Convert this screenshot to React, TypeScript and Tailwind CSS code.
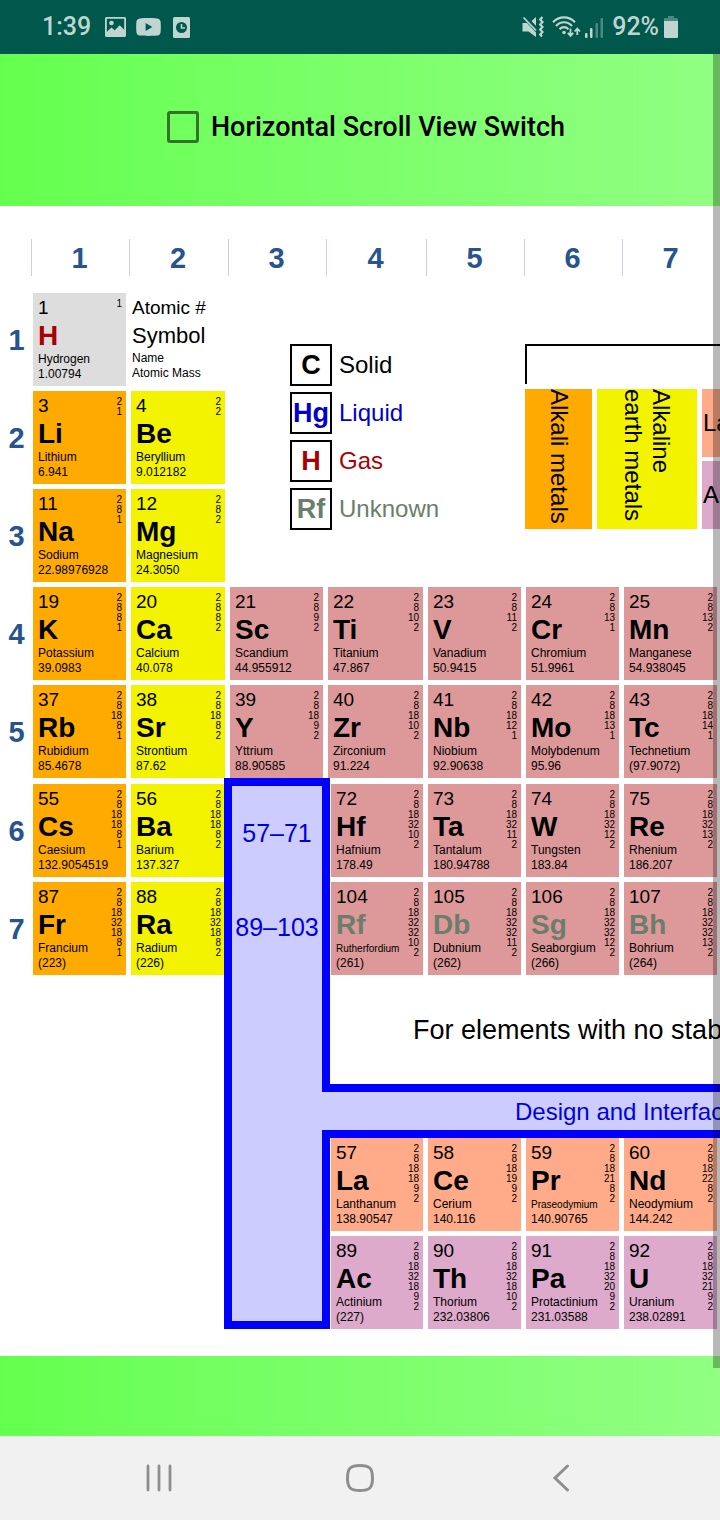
import React from "react";

type Kind = "nonmetal" | "alkali" | "alkaline" | "transition" | "lanthanoid" | "actinoid";
type Phase = "solid" | "gas" | "unknown";

interface Element {
  n: number;
  symbol: string;
  name: string;
  mass: string;
  shells: number[];
  kind: Kind;
  phase?: Phase;
}

const kindClass: Record<Kind, string> = {
  nonmetal: "bg-[#dddddd]",
  alkali: "bg-[#ffaa00]",
  alkaline: "bg-[#f3f300]",
  transition: "bg-[#dd9999]",
  lanthanoid: "bg-[#ffaa88]",
  actinoid: "bg-[#ddaacc]",
};

const phaseClass: Record<Phase, string> = {
  solid: "text-black",
  gas: "text-[#aa0000]",
  unknown: "text-[#6c7d6c]",
};

const el = (
  n: number,
  symbol: string,
  name: string,
  mass: string,
  shells: number[],
  kind: Kind,
  phase: Phase = "solid",
): Element => ({ n, symbol, name, mass, shells, kind, phase });

const period1 = el(1, "H", "Hydrogen", "1.00794", [1], "nonmetal", "gas");

const period2 = [
  el(3, "Li", "Lithium", "6.941", [2, 1], "alkali"),
  el(4, "Be", "Beryllium", "9.012182", [2, 2], "alkaline"),
];

const period3 = [
  el(11, "Na", "Sodium", "22.98976928", [2, 8, 1], "alkali"),
  el(12, "Mg", "Magnesium", "24.3050", [2, 8, 2], "alkaline"),
];

const period4 = [
  el(19, "K", "Potassium", "39.0983", [2, 8, 8, 1], "alkali"),
  el(20, "Ca", "Calcium", "40.078", [2, 8, 8, 2], "alkaline"),
  el(21, "Sc", "Scandium", "44.955912", [2, 8, 9, 2], "transition"),
  el(22, "Ti", "Titanium", "47.867", [2, 8, 10, 2], "transition"),
  el(23, "V", "Vanadium", "50.9415", [2, 8, 11, 2], "transition"),
  el(24, "Cr", "Chromium", "51.9961", [2, 8, 13, 1], "transition"),
  el(25, "Mn", "Manganese", "54.938045", [2, 8, 13, 2], "transition"),
];

const period5 = [
  el(37, "Rb", "Rubidium", "85.4678", [2, 8, 18, 8, 1], "alkali"),
  el(38, "Sr", "Strontium", "87.62", [2, 8, 18, 8, 2], "alkaline"),
  el(39, "Y", "Yttrium", "88.90585", [2, 8, 18, 9, 2], "transition"),
  el(40, "Zr", "Zirconium", "91.224", [2, 8, 18, 10, 2], "transition"),
  el(41, "Nb", "Niobium", "92.90638", [2, 8, 18, 12, 1], "transition"),
  el(42, "Mo", "Molybdenum", "95.96", [2, 8, 18, 13, 1], "transition"),
  el(43, "Tc", "Technetium", "(97.9072)", [2, 8, 18, 14, 1], "transition"),
];

const period6 = [
  el(55, "Cs", "Caesium", "132.9054519", [2, 8, 18, 18, 8, 1], "alkali"),
  el(56, "Ba", "Barium", "137.327", [2, 8, 18, 18, 8, 2], "alkaline"),
  el(72, "Hf", "Hafnium", "178.49", [2, 8, 18, 32, 10, 2], "transition"),
  el(73, "Ta", "Tantalum", "180.94788", [2, 8, 18, 32, 11, 2], "transition"),
  el(74, "W", "Tungsten", "183.84", [2, 8, 18, 32, 12, 2], "transition"),
  el(75, "Re", "Rhenium", "186.207", [2, 8, 18, 32, 13, 2], "transition"),
];

const period7 = [
  el(87, "Fr", "Francium", "(223)", [2, 8, 18, 32, 18, 8, 1], "alkali"),
  el(88, "Ra", "Radium", "(226)", [2, 8, 18, 32, 18, 8, 2], "alkaline"),
  el(104, "Rf", "Rutherfordium", "(261)", [2, 8, 18, 32, 32, 10, 2], "transition", "unknown"),
  el(105, "Db", "Dubnium", "(262)", [2, 8, 18, 32, 32, 11, 2], "transition", "unknown"),
  el(106, "Sg", "Seaborgium", "(266)", [2, 8, 18, 32, 32, 12, 2], "transition", "unknown"),
  el(107, "Bh", "Bohrium", "(264)", [2, 8, 18, 32, 32, 13, 2], "transition", "unknown"),
];

const lanthanoids = [
  el(57, "La", "Lanthanum", "138.90547", [2, 8, 18, 18, 9, 2], "lanthanoid"),
  el(58, "Ce", "Cerium", "140.116", [2, 8, 18, 19, 9, 2], "lanthanoid"),
  el(59, "Pr", "Praseodymium", "140.90765", [2, 8, 18, 21, 8, 2], "lanthanoid"),
  el(60, "Nd", "Neodymium", "144.242", [2, 8, 18, 22, 8, 2], "lanthanoid"),
];

const actinoids = [
  el(89, "Ac", "Actinium", "(227)", [2, 8, 18, 32, 18, 9, 2], "actinoid"),
  el(90, "Th", "Thorium", "232.03806", [2, 8, 18, 32, 18, 10, 2], "actinoid"),
  el(91, "Pa", "Protactinium", "231.03588", [2, 8, 18, 32, 20, 9, 2], "actinoid"),
  el(92, "U", "Uranium", "238.02891", [2, 8, 18, 32, 21, 9, 2], "actinoid"),
];

const longNames = ["Rutherfordium", "Praseodymium"];

function ElementCell({ e, inset = false }: { e: Element; inset?: boolean }) {
  return (
    <td className="p-0 align-top">
      <div
        className={`mr-[5px] flex h-[93px] justify-between pl-[5px] pr-[4px] ${inset ? "ml-[3px]" : ""} ${kindClass[e.kind]}`}
      >
        <div className="w-0 whitespace-nowrap pt-[3px]">
          <div className="text-[19px] leading-6">{e.n}</div>
          <div className={`text-[28px] font-bold leading-8 ${phaseClass[e.phase ?? "solid"]}`}>{e.symbol}</div>
          <div className={`leading-[15px] ${longNames.includes(e.name) ? "text-[10px]" : "text-[12px]"}`}>{e.name}</div>
          <div className="text-[12px] leading-[15px]">{e.mass}</div>
        </div>
        <div className="pt-[6px] text-right text-[10px] leading-[10px]">
          {e.shells.map((s, i) => (
            <div key={i}>{s}</div>
          ))}
        </div>
      </div>
    </td>
  );
}

function PeriodLabel({ n }: { n: number }) {
  return (
    <th scope="row" className="p-0 align-top text-[29px] font-bold leading-[95px] text-[#27548d]">
      {n}
    </th>
  );
}

const phases = [
  { symbol: "C", label: "Solid", color: "text-black" },
  { symbol: "Hg", label: "Liquid", color: "text-[#0000cc]" },
  { symbol: "H", label: "Gas", color: "text-[#aa0000]" },
  { symbol: "Rf", label: "Unknown", color: "text-[#6c7d6c]" },
];

function Legend() {
  return (
    <div className="flex pl-[60px] pt-[51px]">
      <ul className="flex w-[235px] shrink-0 flex-col gap-[6px]">
        {phases.map((p) => (
          <li key={p.label} className={`flex items-center gap-[7px] text-2xl ${p.color}`}>
            <span className="flex h-[42px] w-[42px] items-center justify-center border-2 border-black text-[27px] font-bold leading-none">
              {p.symbol}
            </span>
            {p.label}
          </li>
        ))}
      </ul>
      <div className="shrink-0 text-2xl leading-[28px]">
        <div className="mb-[5px] h-10 border-l-2 border-t-2 border-black" />
        <div className="flex h-[140px] gap-[5px] whitespace-nowrap">
          <div className="flex w-[67px] justify-center bg-[#ffaa00]">
            <span className="[writing-mode:vertical-rl]">Alkali metals</span>
          </div>
          <div className="flex w-[100px] justify-center bg-[#f3f300]">
            <span className="[writing-mode:vertical-rl]">
              Alkaline
              <br />
              earth metals
            </span>
          </div>
          <div className="flex w-[140px] flex-col gap-1">
            <div className="flex flex-1 items-center bg-[#ffaa88] pl-px">Lanthanoids</div>
            <div className="flex flex-1 items-center bg-[#ddaacc] pl-px">Actinoids</div>
          </div>
        </div>
      </div>
    </div>
  );
}

function PeriodicTable() {
  return (
    <table className="w-[722px] table-fixed border-collapse font-['Liberation_Sans',Arial,sans-serif] text-black">
      <colgroup>
        <col className="w-[33px]" />
        <col className="w-[98px]" />
        <col className="w-[99px]" />
        <col className="w-[98px]" />
        <col className="w-[100px]" />
        <col className="w-[98px]" />
        <col className="w-[98px]" />
        <col className="w-[98px]" />
      </colgroup>
      <thead>
        <tr className="h-[87px]">
          <td className="p-0" />
          {[1, 2, 3, 4, 5, 6, 7].map((g) => (
            <th key={g} scope="col" className="p-0 pt-[33px] align-top">
              <div className="-ml-[2px] h-[37px] border-l border-[#ccccee] pr-1 text-[29px] font-bold leading-[39px] text-[#27548d]">
                {g}
              </div>
            </th>
          ))}
        </tr>
      </thead>
      <tbody>
        <tr className="h-[98px]">
          <PeriodLabel n={1} />
          <ElementCell e={period1} />
          <td className="whitespace-nowrap p-0 pl-[1px] pt-[3px] align-top">
            <div className="text-[19px] leading-6">Atomic #</div>
            <div className="text-[22px] leading-[31px]">Symbol</div>
            <div className="text-[12px] leading-[15px]">Name</div>
            <div className="text-[12px] leading-[15px]">Atomic Mass</div>
          </td>
          <td colSpan={5} rowSpan={3} className="p-0 align-top">
            <Legend />
          </td>
        </tr>
        <tr className="h-[98px]">
          <PeriodLabel n={2} />
          {period2.map((e) => <ElementCell key={e.n} e={e} />)}
        </tr>
        <tr className="h-[98px]">
          <PeriodLabel n={3} />
          {period3.map((e) => <ElementCell key={e.n} e={e} />)}
        </tr>
        <tr className="h-[98px]">
          <PeriodLabel n={4} />
          {period4.map((e) => <ElementCell key={e.n} e={e} />)}
        </tr>
        <tr className="h-[99px]">
          <PeriodLabel n={5} />
          {period5.map((e) => <ElementCell key={e.n} e={e} />)}
        </tr>
        <tr className="h-[98px]">
          <PeriodLabel n={6} />
          {period6.slice(0, 2).map((e) => <ElementCell key={e.n} e={e} />)}
          <td rowSpan={5} className="p-0 align-top">
            <div className="relative -ml-[6px] -mr-[2px] -mt-[6px] h-[551px] border-8 border-[#0000ff] bg-[#ccccff] text-center text-[25px] leading-[94px] text-[#0000dd]">
              <div>57–71</div>
              <div>89–103</div>
            </div>
          </td>
          {period6.slice(2).map((e, i) => <ElementCell key={e.n} e={e} inset={i === 0} />)}
        </tr>
        <tr className="h-[98px]">
          <PeriodLabel n={7} />
          {period7.slice(0, 2).map((e) => <ElementCell key={e.n} e={e} />)}
          {period7.slice(2).map((e, i) => <ElementCell key={e.n} e={e} inset={i === 0} />)}
        </tr>
        <tr className="h-[158px]">
          <td colSpan={3} className="p-0" />
          <td colSpan={4} className="whitespace-nowrap p-0 align-top">
            <div className="flex h-[104px] items-center pb-1 pl-[85px] text-[27px]">
              For elements with no stable isotopes
            </div>
            <div className="relative -ml-[6px] flex h-[54px] items-center border-y-8 border-[#0000ff] bg-[#ccccff] pl-[193px] pt-[2px] text-2xl text-[#0000dd]">
              Design and Interface
            </div>
          </td>
        </tr>
        <tr className="h-[98px]">
          <td colSpan={3} className="p-0" />
          {lanthanoids.map((e, i) => <ElementCell key={e.n} e={e} inset={i === 0} />)}
        </tr>
        <tr className="h-[93px]">
          <td colSpan={3} className="p-0" />
          {actinoids.map((e, i) => <ElementCell key={e.n} e={e} inset={i === 0} />)}
        </tr>
      </tbody>
    </table>
  );
}

function StatusBar() {
  return (
    <header className="flex h-[54px] items-center justify-between bg-[#00574b] pl-[42px] pr-[42px] text-[25px] font-medium text-[#bfd5d2]">
      <div className="flex items-center">
        <span>1:39</span>
        <svg className="ml-[14px]" width="21" height="20" viewBox="0 0 21 20" fill="currentColor">
          <path
            fillRule="evenodd"
            d="M1.500 0h18A1.500 1.500 0 0 1 21 1.500v17a1.500 1.500 0 0 1-1.500 1.500h-18A1.500 1.500 0 0 1 0 18.500v-17A1.500 1.500 0 0 1 1.500 0zM1.800 1.800v13l4.700-4.300 3.200 2.700 5-5 4.500 4.500V1.800z"
          />
          <circle cx="6.500" cy="6" r="2.300" />
        </svg>
        <svg className="ml-[10px]" width="25" height="18" viewBox="0 0 26 18" fill="currentColor" preserveAspectRatio="none">
          <path
            fillRule="evenodd"
            d="M4 .4C9 -.1 17 -.1 22 .4c2.500.3 3.400 1.600 3.600 3.600.3 3 .3 7 0 10-.2 2-1.100 3.300-3.600 3.600-5 .5-13 .5-18 0C1.500 17.300.6 16 .4 14c-.3-3-.3-7 0-10C.6 2 1.500.7 4 .4zM10 5v8l7-4z"
          />
        </svg>
        <svg className="ml-[12px]" width="17" height="21" viewBox="0 0 17 21" fill="none">
          <rect width="17" height="21" rx="1.500" fill="currentColor" />
          <circle cx="8.500" cy="10.500" r="5.500" fill="#00574b" />
          <path d="M8.500 7v4h3.500" stroke="currentColor" strokeWidth="1.600" />
        </svg>
      </div>
      <div className="flex items-center">
        <svg width="23" height="22" viewBox="0 0 23 22" fill="none">
          <path d="M.5 7H5l9 9.500V21L6.500 15.500h-6z" fill="currentColor" />
          <path d="M9.500 5 14 1v9z" fill="currentColor" />
          <path d="M1.500 1.500 14 14.500" stroke="currentColor" strokeWidth="1.800" />
          <path
            d="M20.500 1l-2.300 2.500 2.300 2.500-2.300 2.500 2.300 2.500-2.300 2.500 2.300 2.500-2.300 2.500 1.800 2"
            stroke="currentColor"
            strokeWidth="2.200"
          />
        </svg>
        <svg className="ml-[7px]" width="29" height="22" viewBox="0 0 29 22" fill="none" stroke="currentColor">
          <path d="M1 6.200C7-.3 17-.3 23 6.200" strokeWidth="2.100" />
          <path d="M4 10C8.500 5 15.500 5 20 10" strokeWidth="2.100" />
          <path d="M7.500 13.200c2.700-2.800 6.300-2.800 9 0" strokeWidth="2.100" />
          <circle cx="12" cy="16.500" r="1.800" fill="currentColor" stroke="none" />
          <path d="M18.500 12.500v7M15.800 16.800l2.700 3 2.700-3M25.300 19v-6M22.600 15.500l2.700-3 2.700 3" strokeWidth="1.800" />
        </svg>
        <svg className="ml-[4px]" width="19" height="21" viewBox="0 0 19 21" fill="currentColor">
          <rect x="0" y="16" width="2.500" height="5" rx="1" />
          <rect x="5" y="11" width="2.500" height="10" rx="1" />
          <rect x="10.500" y="6" width="2.500" height="15" rx="1" opacity=".4" />
          <rect x="15.500" y="1" width="2.500" height="20" rx="1" opacity=".4" />
        </svg>
        <span className="ml-[8px]">92%</span>
        <svg className="ml-[5px]" width="14" height="22" viewBox="0 0 14 22" fill="currentColor">
          <path d="M4 0h6v2h3q1 0 1 1v2H0V3q0-1 1-1h3z" opacity=".4" />
          <path d="M0 5h14v16q0 1-1 1H1q-1 0-1-1z" />
        </svg>
      </div>
    </header>
  );
}

function NavBar() {
  return (
    <nav className="flex h-[84px] items-center bg-[#f1f1f1] px-[58px] text-[#8e8e8e]">
      <button type="button" aria-label="Recent apps" className="flex flex-1 justify-center py-2">
        <svg width="26" height="28" viewBox="0 0 26 28" stroke="currentColor" strokeWidth="2.800" strokeLinecap="round">
          <path d="M2 2v24M13 2v24M24 2v24" />
        </svg>
      </button>
      <button type="button" aria-label="Home" className="flex flex-1 justify-center py-2">
        <svg width="30" height="28" viewBox="0 0 30 28" fill="none" stroke="currentColor" strokeWidth="3">
          <path d="M15 1.500c9.500 0 12.500 2.500 12.500 12.500S24.500 26.500 15 26.500 2.500 24 2.500 14 5.500 1.500 15 1.500z" />
        </svg>
      </button>
      <button type="button" aria-label="Back" className="flex flex-1 justify-center py-2">
        <svg width="18" height="28" viewBox="0 0 18 28" fill="none" stroke="currentColor" strokeWidth="3" strokeLinecap="round">
          <path d="M15.500 2 3 14l12.500 12" />
        </svg>
      </button>
    </nav>
  );
}

export default function App() {
  return (
    <div className="font-[Roboto,sans-serif]">
      <StatusBar />
      <main className="relative overflow-hidden bg-linear-to-r from-[#64ff4e] to-[#90ff82]">
        <div className="flex h-[152px] items-center justify-center pb-[6px] pl-3">
          <label className="flex items-center gap-3 text-[27px] font-medium text-black">
            <input
              type="checkbox"
              className="h-8 w-8 appearance-none rounded-[3px] border-3 border-black/55 checked:bg-black/55"
            />
            Horizontal Scroll View Switch
          </label>
        </div>
        <div className="overflow-hidden bg-white pb-[27px]">
          <PeriodicTable />
        </div>
        <div className="h-20" />
        <div className="absolute bottom-[68px] right-0 top-0 w-[7px] bg-black/28" />
      </main>
      <NavBar />
    </div>
  );
}
